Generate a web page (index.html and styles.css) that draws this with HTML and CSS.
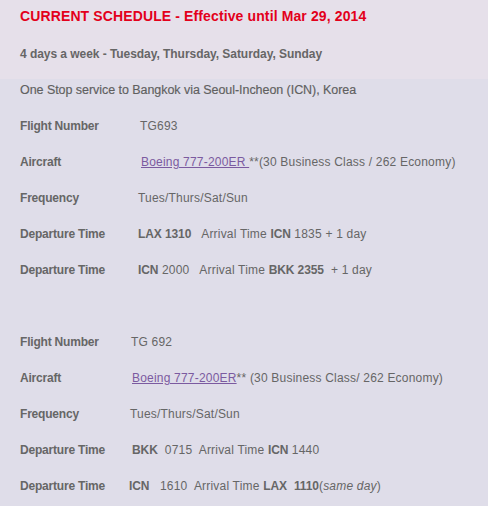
FILE: index.html
```html
<!DOCTYPE html>
<html>
<head>
<meta charset="utf-8">
<link rel="stylesheet" href="styles.css">
</head>
<body>
<div class="header">
  <h1 class="title">CURRENT SCHEDULE - Effective until Mar 29, 2014</h1>
  <p class="days">4 days a week - Tuesday, Thursday, Saturday, Sunday</p>
</div>
<p class="intro">One Stop service to Bangkok via Seoul-Incheon (ICN), Korea</p>

<div class="block block-out">
  <div class="label">Flight Number</div>
  <div class="value off2">TG693</div>
  <div class="label">Aircraft</div>
  <div class="value off3"><a href="#">Boeing 777-200ER </a>**(30 Business Class / 262 Economy)</div>
  <div class="label">Frequency</div>
  <div class="value">Tues/Thurs/Sat/Sun</div>
  <div class="label">Departure Time</div>
  <div class="value"><b>LAX 1310</b>&nbsp;&nbsp; Arrival Time <b>ICN</b> 1835 + 1 day</div>
  <div class="label">Departure Time</div>
  <div class="value"><b>ICN</b> 2000&nbsp;&nbsp; Arrival Time <b>BKK 2355</b>&nbsp; + 1 day</div>
</div>

<div class="spacer"></div>

<div class="block block-in">
  <div class="label">Flight Number</div>
  <div class="value off1">TG 692</div>
  <div class="label">Aircraft</div>
  <div class="value off2"><a href="#">Boeing 777-200ER</a>** (30 Business Class/ 262 Economy)</div>
  <div class="label">Frequency</div>
  <div class="value">Tues/Thurs/Sat/Sun</div>
  <div class="label">Departure Time</div>
  <div class="value off2"><b>BKK</b>&nbsp; 0715&nbsp; Arrival Time <b>ICN</b> 1440</div>
  <div class="label">Departure Time</div>
  <div class="value offm1"><b>ICN</b>&nbsp;&nbsp; 1610&nbsp; Arrival Time <b>LAX</b>&nbsp; <b>1110</b>(<i>same day</i>)</div>
</div>
</body>
</html>
```

FILE: styles.css
```css
html, body {
  margin: 0;
  padding: 0;
}
body {
  background: #dfdde9;
  font-family: "Liberation Sans", Arial, sans-serif;
  font-size: 12px;
  color: #666666;
}
.header {
  background: #e6e0ea;
  height: 79px;
  padding-left: 20px;
  box-sizing: border-box;
  padding-top: 6px;
}
.title {
  margin: 0;
  font-size: 14px;
  line-height: 20px;
  font-weight: bold;
  color: #e3001b;
  letter-spacing: 0.12px;
}
.days {
  margin: 18px 0 0;
  font-weight: bold;
  line-height: 20px;
  letter-spacing: -0.05px;
}
.intro {
  margin: 0 0 8px;
  padding: 1px 0 0 20px;
  line-height: 20px;
  font-size: 12.5px;
  letter-spacing: -0.05px;
  color: #606060;
  -webkit-text-stroke: 0.15px #606060;
}
.block {
  display: grid;
  padding-left: 20px;
  line-height: 36px;
}
.block-out {
  grid-template-columns: 118px auto;
}
.block-in {
  grid-template-columns: 110px auto;
}
.label {
  font-weight: bold;
  letter-spacing: -0.2px;
}
.value {
  white-space: nowrap;
  letter-spacing: 0.2px;
}
.value b {
  letter-spacing: -0.1px;
}
.off1 { margin-left: 1px; }
.off2 { margin-left: 2px; }
.off3 { margin-left: 3px; }
.offm1 { margin-left: -1px; }
.value a {
  color: #7b5aa0;
  text-decoration: underline;
}
.spacer {
  height: 36px;
}
```
